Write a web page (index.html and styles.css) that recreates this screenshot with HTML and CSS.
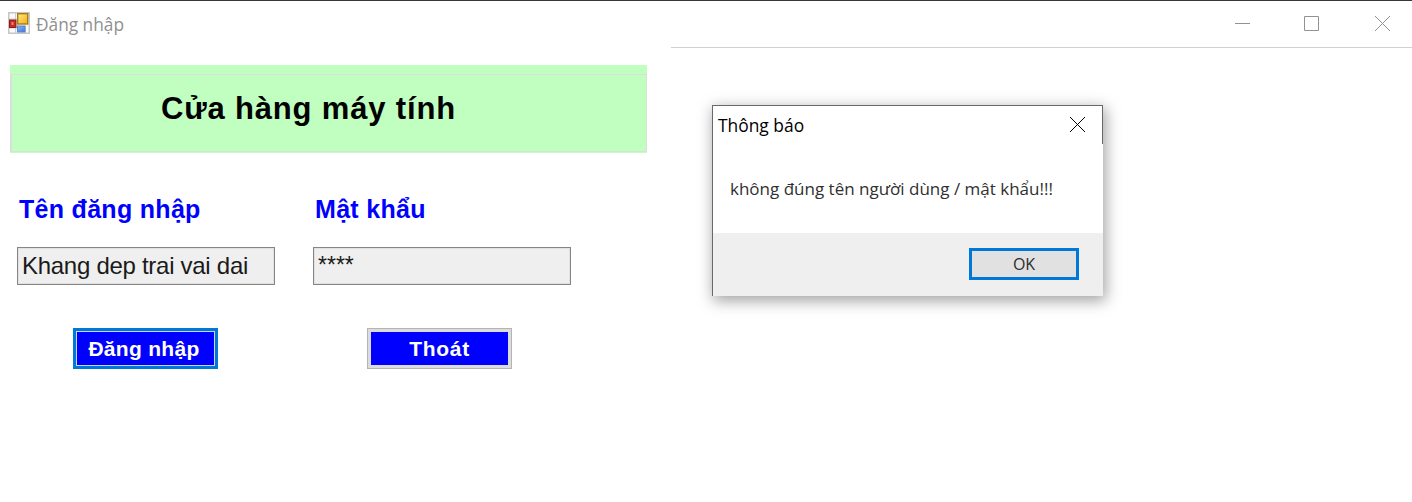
FILE: index.html
```html
<!DOCTYPE html>
<html lang="vi">
<head>
<meta charset="utf-8">
<title>Đăng nhập</title>
<link rel="stylesheet" href="styles.css">
</head>
<body>
<div class="window">
  <header class="titlebar">
    <div class="caption">
      <svg class="app-icon" width="22" height="22" viewBox="0 0 22 22">
        <defs>
          <linearGradient id="gold" x1="0" y1="0" x2="1" y2="1"><stop offset="0" stop-color="#ffe98a"/><stop offset="1" stop-color="#efb20c"/></linearGradient>
          <linearGradient id="blue" x1="0" y1="0" x2="1" y2="1"><stop offset="0" stop-color="#8bb4f4"/><stop offset="1" stop-color="#3e78dc"/></linearGradient>
        </defs>
        <rect x=".75" y=".75" width="20.5" height="20.5" fill="#fafafa" stroke="#c6c6c6" stroke-width="1.5"/>
        <path d="M7.5 1v20M1 7h8M1 16h8M17.500 14v7" stroke="#cfcfcf" fill="none"/>
        <rect x="1.500" y="8" width="6.500" height="7.500" fill="#c22d20" stroke="#8f1c18"/>
        <rect x="3.500" y="10" width="2" height="3" fill="#ec8576"/>
        <rect x="9.700" y="1.700" width="10" height="10.300" fill="url(#gold)" stroke="#a87b16" stroke-width="1.400"/>
        <rect x="9.500" y="14" width="7.500" height="6" fill="url(#blue)" stroke="#5583d2"/>
      </svg>
      <span class="caption-text">Đăng nhập</span>
    </div>
    <div class="controls">
      <svg class="icon" width="17" height="17" viewBox="0 0 17 17"><path d="M1 8.500h15"/></svg>
      <svg class="icon" width="17" height="17" viewBox="0 0 17 17"><path d="M1.500 1.500h14v14h-14z"/></svg>
      <svg class="icon" width="17" height="17" viewBox="0 0 17 17"><path d="M1 1l15 15M16 1L1 16"/></svg>
    </div>
  </header>

  <main class="login">
    <section class="banner"><div class="banner-frame"><h1 class="shop">Cửa hàng máy tính</h1></div></section>
    <form class="fields">
      <div class="field">
        <div class="label label-user">Tên đăng nhập</div>
        <div class="input"><span class="value">Khang dep trai vai dai</span></div>
        <div class="button button-focus"><span class="enter">Đăng nhập</span></div>
      </div>
      <div class="field">
        <div class="label label-pass">Mật khẩu</div>
        <div class="input"><span class="mask">****</span></div>
        <div class="button"><span class="exit">Thoát</span></div>
      </div>
    </form>
  </main>

  <div class="dialog">
    <div class="dialog-head">
      <span class="dialog-title">Thông báo</span>
      <svg class="icon icon-dark" width="17" height="17" viewBox="0 0 17 17"><path d="M1 1l15 15M16 1L1 16"/></svg>
    </div>
    <div class="dialog-body"><span class="message">không đúng tên người dùng / mật khẩu!!!</span></div>
    <div class="dialog-foot"><div class="ok">OK</div></div>
  </div>
</div>
</body>
</html>
```
FILE: styles.css
```css
* { box-sizing: border-box; }
body { margin: 0; background: #fff; overflow: hidden; font-family: "Open Sans", "Noto Sans", sans-serif; }
.window { position: relative; width: 1412px; height: 502px; border-top: 1px solid #37363a; background: #fff; }
.window span, .label, .shop { white-space: nowrap; }

.titlebar { display: flex; height: 47px; }
.caption { display: flex; align-items: center; gap: 6px; width: 671px; padding: 0 0 3px 8px; }
.caption-text { font-size: 17.300px; color: #909090; padding-top: 2px; }
.controls { display: flex; flex: 1; justify-content: flex-end; align-items: center; gap: 53px; padding: 0 21px 1px 0; border-bottom: 1px solid #d2d2d2; }
.controls .icon:nth-child(2) { margin: 0 1px 0 -1px; }
.icon { fill: none; stroke: #929292; stroke-width: 1; display: block; }
.icon-dark { stroke: #000; stroke-width: 1; margin-bottom: 1px; }

.login { width: 671px; padding: 17px 24px 0 10px; font-family: "Liberation Sans", Arial, sans-serif; }
.banner { height: 88px; padding: 9px 0 1px; background: #c0ffc0; }
.banner-frame { height: 78px; padding: 14px 0 0 149px; border: 1px solid #d9dfd9; border-left-width: 2px; }
.shop { margin: 0; font-size: 31px; line-height: 40px; letter-spacing: 0.830px; color: #000; }
.fields { display: flex; gap: 37px; padding: 39px 0 0 7px; }
.field { width: 259px; }
.label { height: 55px; padding: 2px 0 0 2px; line-height: 30px; font-size: 25px; font-weight: 700; letter-spacing: 0.300px; color: #00f; }
.input { width: 258px; height: 38px; border: 1px solid #858585; outline: 1px solid #b9b9b940; outline-offset: -2px; background: #efefef; padding: 3px 0 0 4px; line-height: 30px; color: #1a1a1a; }
.value { font-size: 24px; letter-spacing: -0.280px; }
.mask { display: block; font-size: 23px; line-height: 28px; }
.button { display: flex; align-items: center; justify-content: center; width: 145px; height: 41px; margin: 43px 0 0 54px; border: 1px solid #b4b4b4; background: #00f; color: #fff; box-shadow: inset 0 0 0 3px #dcdcdc; font-size: 21px; font-weight: 700; }
.button-focus { margin-left: 56px; border: 3px solid #0078d7; box-shadow: inset 0 0 0 1px #ccd5ee; }
.enter { letter-spacing: 0.300px; margin-right: 3px; }
.exit { letter-spacing: 0.700px; }

.dialog { position: absolute; left: 712px; top: 104px; width: 391px; height: 191px; border-left: 1px solid #696969; background: #fff; box-shadow: 2px 4px 14px 1px #0000005c; }
.dialog-head { display: flex; justify-content: space-between; align-items: center; height: 39px; border-top: 1px solid #696969; border-right: 1px solid #696969; padding: 0 16px 0 5px; }
.dialog-title { font-size: 17.400px; color: #000; }
.dialog-body { height: 89px; padding: 33px 0 0 17px; font-size: 17px; line-height: 24px; color: #303030; }
.dialog-foot { height: 63px; padding: 15px 24px 0 0; background: #efefef; display: flex; justify-content: flex-end; align-items: flex-start; }
.ok { width: 110px; height: 32px; border: 3px solid #0078d7; background: #e1e1e1; text-align: center; font-size: 16px; line-height: 27px; color: #2c2c2c; }
```
